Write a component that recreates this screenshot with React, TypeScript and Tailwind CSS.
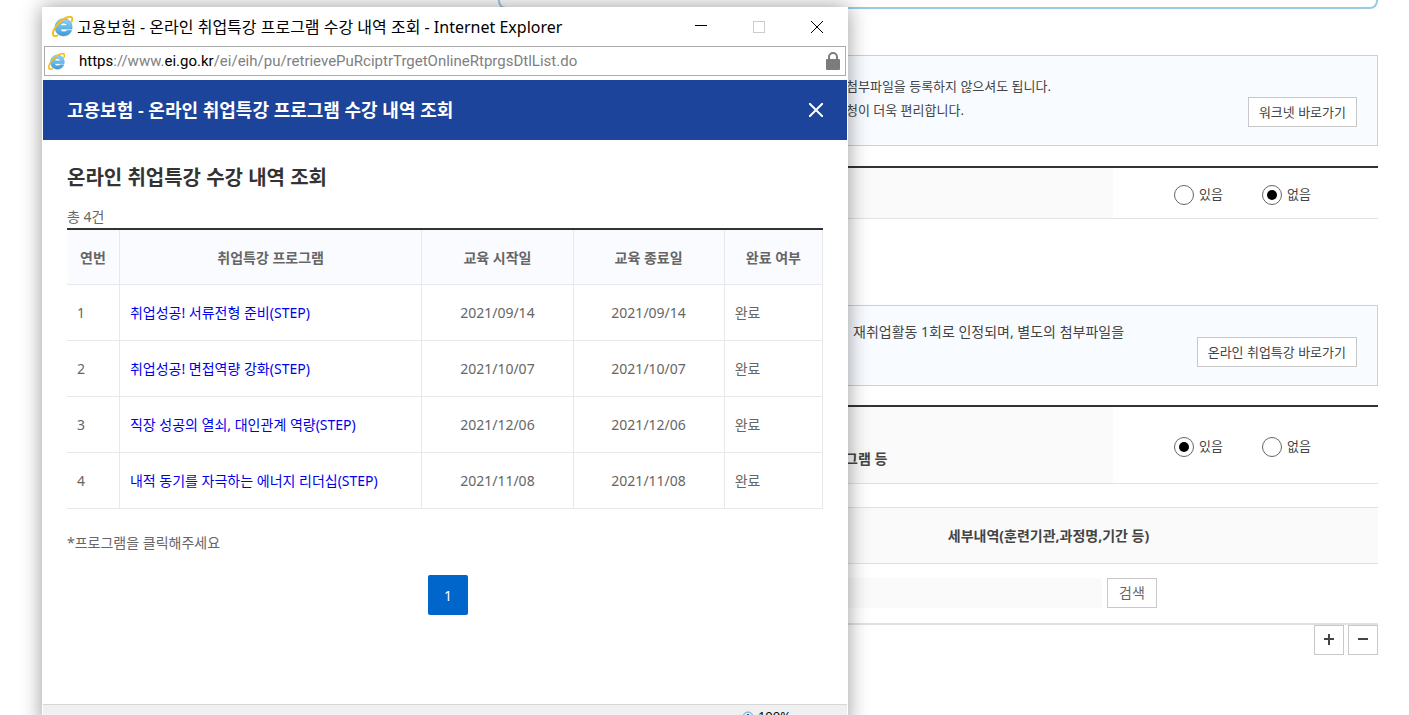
import React, { useState } from 'react';

type Course = {
  no: number;
  title: string;
  start: string;
  end: string;
  status: string;
};

const COURSES: Course[] = [
  { no: 1, title: '취업성공! 서류전형 준비(STEP)', start: '2021/09/14', end: '2021/09/14', status: '완료' },
  { no: 2, title: '취업성공! 면접역량 강화(STEP)', start: '2021/10/07', end: '2021/10/07', status: '완료' },
  { no: 3, title: '직장 성공의 열쇠, 대인관계 역량(STEP)', start: '2021/12/06', end: '2021/12/06', status: '완료' },
  { no: 4, title: '내적 동기를 자극하는 에너지 리더십(STEP)', start: '2021/11/08', end: '2021/11/08', status: '완료' },
];

function ExplorerIcon({ className }: { className: string }) {
  return (
    <svg viewBox="0 0 20 20" className={className} fill="none" aria-hidden="true">
      <defs>
        <linearGradient id="ie-blue" x1="0" y1="0" x2="0" y2="1">
          <stop offset="0" stopColor="#8fd3f5" />
          <stop offset="0.5" stopColor="#66bdea" />
          <stop offset="1" stopColor="#4297d6" />
        </linearGradient>
      </defs>
      <path
        d="M19 12.4H7.8c.3 1.7 1.7 2.7 3.5 2.7 1.3 0 2.3-.4 3-1.2h4.4C17.5 17 14.8 19 11 19 6.300 19 3 15.7 3 11s3.4-8.4 8.1-8.4c4.9 0 8 3.4 8 8.4 0 .5 0 1-.1 1.4zM7.8 9.3h6.8c-.3-1.7-1.6-2.7-3.4-2.7s-3.1 1-3.4 2.7z"
        fill="url(#ie-blue)"
        stroke="#4a9bd0"
        strokeWidth="0.6"
      />
      <path
        d="M5 18.6C2.5 19.5.8 19.1.8 17c0-4 4.2-9.8 9.2-13.3C14 .9 17.8-.1 18.9 1.5c.7 1 .4 2.4-.3 3.8"
        stroke="#f3bd1b"
        strokeWidth="1.8"
        strokeLinecap="round"
      />
    </svg>
  );
}

function RadioPair({ name, initial }: { name: string; initial: '있음' | '없음' }) {
  const [value, setValue] = useState<string>(initial);
  return (
    <div className="flex items-center gap-[39px] pt-[3px] pl-[61px]">
      {['있음', '없음'].map((option) => (
        <label key={option} className="flex items-start gap-[5px] text-[13px] leading-[18px]">
          <input
            type="radio"
            name={name}
            value={option}
            checked={value === option}
            onChange={() => setValue(option)}
            className="m-0 h-5 w-5 appearance-none rounded-full border border-[#666] bg-clip-content p-1 checked:bg-black"
          />
          {option}
        </label>
      ))}
    </div>
  );
}

function InfoBox({ children, action, className }: { children: React.ReactNode; action: string; className: string }) {
  return (
    <div
      className={`flex justify-between border border-[#b9d6e4] bg-[#f8fbff] py-[18px] pr-5 ${className}`}
    >
      <div className="leading-6">{children}</div>
      <button
        type="button"
        className="h-[30px] shrink-0 self-end border border-[#c8c8c8] bg-white px-[10px] text-[13px] leading-5"
      >
        {action}
      </button>
    </div>
  );
}

function ApplicationForm() {
  return (
    <main className="pr-[31px] pl-[60px] text-[#444]">
      <div className="ml-[438px] h-[9px] rounded-b-lg border-2 border-t-0 border-[#99cbe6]" />

      <InfoBox action="워크넷 바로가기" className="mt-[46px] h-[91px] pl-[785px] text-[13px]">
        <p>첨부파일을 등록하지 않으셔도 됩니다.</p>
        <p>청이 더욱 편리합니다.</p>
      </InfoBox>

      <table className="mt-5 w-full border-separate border-spacing-0 border-t-2 border-[#333]">
        <tbody>
          <tr>
            <th className="h-[51px] border-b border-[#e1e1e1] bg-[#fafafa]" />
            <td className="w-[265px] border-b border-[#e1e1e1]">
              <RadioPair name="worknet" initial="없음" />
            </td>
          </tr>
        </tbody>
      </table>

      <InfoBox action="온라인 취업특강 바로가기" className="mt-[86px] h-[81px] pl-[792px] text-[14px]">
        <p className="-mt-1">재취업활동 1회로 인정되며, 별도의 첨부파일을</p>
      </InfoBox>

      <table className="mt-[19px] w-full border-separate border-spacing-0 border-t-2 border-[#333]">
        <tbody>
          <tr>
            <th className="h-[77px] border-b border-[#e1e1e1] bg-[#fafafa] pb-3 pl-[785px] text-left align-bottom text-[14px] leading-6 font-bold">
              그램 등
            </th>
            <td className="w-[265px] border-b border-[#e1e1e1]">
              <RadioPair name="lecture" initial="있음" />
            </td>
          </tr>
        </tbody>
      </table>

      <table className="mt-[23px] w-full table-fixed border-separate border-spacing-0 border-b-2 border-[#e1e1e1]">
        <thead>
          <tr className="bg-[#fafafa]">
            <th className="h-[57px] border-y border-[#e1e1e1]" />
            <th className="h-[57px] border-y border-[#e1e1e1] text-[14px] font-bold">
              세부내역(훈련기관,과정명,기간 등)
            </th>
          </tr>
        </thead>
        <tbody>
          <tr>
            <td />
            <td className="h-[59px] pb-px pl-4">
              <div className="flex gap-[5px]">
                <input
                  type="text"
                  aria-label="세부내역"
                  readOnly
                  className="h-[30px] w-[367px] bg-[#fafafa] px-2 text-[14px] outline-none"
                />
                <button
                  type="button"
                  className="h-[30px] border border-[#c8c8c8] bg-white px-[11px] text-[14px] leading-5 text-[#666]"
                >
                  검색
                </button>
              </div>
            </td>
          </tr>
        </tbody>
      </table>

      <div className="flex justify-end gap-1">
        <button
          type="button"
          aria-label="추가"
          className="flex h-[30px] w-[30px] items-center justify-center border border-[#c8c8c8] bg-white"
        >
          <svg viewBox="0 0 12 12" className="h-3 w-3" stroke="#444" strokeWidth="2">
            <path d="M6 0v11M1 5h10" />
          </svg>
        </button>
        <button
          type="button"
          aria-label="삭제"
          className="flex h-[30px] w-[30px] items-center justify-center border border-[#c8c8c8] bg-white"
        >
          <svg viewBox="0 0 12 12" className="h-3 w-3" stroke="#444" strokeWidth="2">
            <path d="M1 5h10" />
          </svg>
        </button>
      </div>
    </main>
  );
}

function TitleBar() {
  return (
    <div className="flex h-[39px] items-center justify-between pr-6 pl-[9px] text-black">
      <div className="flex items-center gap-1">
        <ExplorerIcon className="h-[21px] w-[21px]" />
        <span className="text-[16px] leading-6">
          고용보험 - 온라인 취업특강 프로그램 수강 내역 조회 - Internet Explorer
        </span>
      </div>
      <div className="flex items-center gap-[46px]">
        <button type="button" aria-label="최소화">
          <svg viewBox="0 0 12 12" className="h-3 w-3" stroke="#000" shapeRendering="crispEdges">
            <path d="M0 4.5h12" />
          </svg>
        </button>
        <button type="button" aria-label="최대화" disabled>
          <svg viewBox="0 0 12 12" className="h-3 w-3" stroke="#ccc" fill="none" shapeRendering="crispEdges">
            <path d="M.5.5h11v11H.5z" />
          </svg>
        </button>
        <button type="button" aria-label="닫기">
          <svg viewBox="0 0 12 12" className="h-3 w-3" stroke="#000">
            <path d="M0 0l12 12M12 0L0 12" />
          </svg>
        </button>
      </div>
    </div>
  );
}

function AddressBar() {
  return (
    <div className="mx-px mb-1 flex h-[30px] items-center border border-[#acacac] bg-white pr-[5px] pl-[3px]">
      <ExplorerIcon className="h-[17px] w-[17px]" />
      <p className="flex-1 pl-[14px] font-['Roboto',sans-serif] text-[15px] leading-5 text-[#808080]">
        <span className="text-black">https</span>://www.<span className="text-black">ei.go.kr</span>
        /ei/eih/pu/retrievePuRciptrTrgetOnlineRtprgsDtlList.do
      </p>
      <svg viewBox="0 0 14 18" className="h-[18px] w-[14px]" aria-hidden="true">
        <path d="M3 8V5a4 4 0 0 1 8 0v3" fill="none" stroke="#7c7c7c" strokeWidth="2" />
        <rect x="0" y="7" width="14" height="11" rx="1" fill="#7c7c7c" />
      </svg>
    </div>
  );
}

const headCell = 'h-[55px] border-r border-b border-[#e8e9ee] font-bold';
const bodyCell = 'h-14 border-r border-b border-[#e8e8ea] px-[10px]';

function CourseTable() {
  return (
    <table className="w-full table-fixed border-separate border-spacing-0 border-t-2 border-[#333] text-[14px]">
      <colgroup>
        <col className="w-[7%]" />
        <col className="w-[40%]" />
        <col className="w-[20%]" />
        <col className="w-[20%]" />
        <col className="w-[13%]" />
      </colgroup>
      <thead className="bg-[#fafbff]">
        <tr>
          <th className={headCell}>연번</th>
          <th className={headCell}>취업특강 프로그램</th>
          <th className={headCell}>교육 시작일</th>
          <th className={headCell}>교육 종료일</th>
          <th className={headCell}>완료 여부</th>
        </tr>
      </thead>
      <tbody>
        {COURSES.map((course) => (
          <tr key={course.no}>
            <td className={bodyCell}>{course.no}</td>
            <td className={bodyCell}>
              <a href={`#course-${course.no}`} className="text-[#0000ee]">
                {course.title}
              </a>
            </td>
            <td className={`${bodyCell} text-center`}>{course.start}</td>
            <td className={`${bodyCell} text-center`}>{course.end}</td>
            <td className={bodyCell}>{course.status}</td>
          </tr>
        ))}
      </tbody>
    </table>
  );
}

function PopupWindow() {
  return (
    <section className="absolute top-[7px] left-[42px] w-[806px] bg-white px-px text-[#666] shadow-[0_0_20px_rgba(0,0,0,0.4)]">
      <TitleBar />
      <AddressBar />
      <header className="flex h-[60px] items-center justify-between bg-[#1c449b] pr-6 pl-6 text-white">
        <h1 className="text-[18px] leading-6 font-semibold">고용보험 - 온라인 취업특강 프로그램 수강 내역 조회</h1>
        <button type="button" aria-label="팝업 닫기">
          <svg viewBox="0 0 14 14" className="h-[14px] w-[14px]" stroke="#fff" strokeWidth="2">
            <path d="M0 0l14 14M14 0L0 14" />
          </svg>
        </button>
      </header>

      <div className="h-[564px] px-6 pt-6">
        <h2 className="text-[20px] leading-7 font-bold text-[#333]">온라인 취업특강 수강 내역 조회</h2>
        <p className="mt-[15px] mb-px text-[14px] leading-5">총 4건</p>
        <CourseTable />
        <p className="mt-6 text-[14px] leading-5">*프로그램을 클릭해주세요</p>
        <nav className="mt-[22px] flex justify-center pl-[6px]">
          <a
            href="#page-1"
            aria-current="page"
            className="flex h-10 w-10 items-center justify-center rounded-xs bg-[#0066cc] text-[14px] text-white"
          >
            1
          </a>
        </nav>
      </div>

      <footer className="flex h-6 items-center justify-end gap-1 border-t border-[#d7d7d7] bg-[#f0f0f0] pr-14 text-[13px] text-black">
        <svg viewBox="0 0 12 12" className="h-3 w-3" aria-hidden="true">
          <circle cx="6" cy="6" r="5" fill="#dcebf8" stroke="#7d9cb8" />
          <path d="M6 3v6M3 6h6" stroke="#1c5fae" strokeWidth="2" />
        </svg>
        <span>100%</span>
      </footer>
    </section>
  );
}

export default function App() {
  return (
    <div className="relative h-screen overflow-hidden bg-white font-['Noto_Sans','Noto_Sans_CJK_KR',sans-serif]">
      <ApplicationForm />
      <PopupWindow />
    </div>
  );
}
